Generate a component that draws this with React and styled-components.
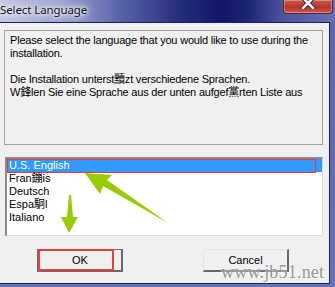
import React from 'react';
import styled, { createGlobalStyle } from 'styled-components';

const GlobalStyle = createGlobalStyle`
  html, body {
    margin: 0;
    padding: 0;
    background: #6068ae;
  }
  body {
    width: 335px;
    height: 287px;
    overflow: hidden;
  }
`;

const Window = styled.div`
  position: relative;
  width: 335px;
  height: 287px;
  box-sizing: border-box;
  padding: 0 5px 3px 0;
  display: flex;
  flex-direction: column;
  background: linear-gradient(to bottom, #5c64aa, #6a72b6);
  overflow: hidden;
  font-family: "Liberation Sans", Arial, "Noto Sans CJK SC", sans-serif;
`;

const TitleBar = styled.div`
  height: 22px;
  margin-right: -5px;
  flex-shrink: 0;
  display: flex;
  align-items: flex-start;
  justify-content: space-between;
  background: linear-gradient(
    to right,
    #c4cae4 0%,
    #98a0cf 20%,
    #5a62aa 36%,
    #262c7c 54%,
    #10156a 66%,
    #1e2474 74%,
    #4a52a0 84%,
    #6a70b4 100%
  );
`;

const Title = styled.span`
  font-family: "Noto Sans", "Open Sans", sans-serif;
  font-size: 11.5px;
  line-height: 16px;
  padding-top: 2px;
  letter-spacing: -0.1px;
  color: #111;
  text-shadow: 0 0 6px #fff, 0 0 10px #fff, 0 0 3px #fff;
`;

const CloseButton = styled.div`
  width: 48px;
  height: 13px;
  margin-right: 2px;
  display: flex;
  align-items: flex-start;
  justify-content: center;
  border: 1px solid #4a2a3a;
  border-top: none;
  border-radius: 0 0 4px 4px;
  background: linear-gradient(to bottom, #c45a4e 0%, #b8342a 55%, #d2584a 100%);
  box-shadow: inset 0 0 0 1px rgba(255, 200, 190, 0.45);
  svg {
    margin-top: -3px;
  }
`;

const Body = styled.div`
  flex: 1;
  display: flex;
  flex-direction: column;
  align-items: flex-start;
  background: #f0f0f0;
  border: 1px solid #1e2250;
  border-left: none;
  padding: 7px 0 0 4px;
`;

const GroupBox = styled.div`
  width: 319px;
  height: 115px;
  box-sizing: border-box;
  border: 1px solid #a0a0a0;
  padding: 3px 4px 3px 5px;
  font-size: 11px;
  line-height: 13px;
  letter-spacing: -0.2px;
  color: #000;
  p {
    margin: 0 0 13px;
  }
`;

const ListBox = styled.div`
  margin: 12px 0 0 1px;
  width: 318px;
  height: 79px;
  box-sizing: border-box;
  border-style: solid;
  border-width: 2px 1px 1px 2px;
  border-color: #8a8a8a #dadada #dadada #8a8a8a;
  background: #fff;
  font-size: 11px;
`;

const ListItem = styled.div`
  position: relative;
  height: 13px;
  line-height: 13px;
  padding-left: 2px;
  color: ${p => (p.$selected ? '#fff' : '#000')};
  background: ${p => (p.$selected ? '#3399ff' : 'transparent')};
  ${p =>
    p.$marked &&
    `
    &::after {
      content: '';
      position: absolute;
      left: 0;
      top: 0;
      right: 6px;
      bottom: -1px;
      border: 1px solid #e5403c;
    }
  `}
`;

const ButtonRow = styled.div`
  display: flex;
  gap: 80px;
  margin: 13px 0 0 33px;
`;

const Button = styled.div`
  position: relative;
  width: 86px;
  height: 23px;
  box-sizing: border-box;
  display: flex;
  align-items: center;
  justify-content: center;
  background: #f0f0f0;
  border-style: solid;
  border-width: 1px 2px 2px 1px;
  border-color: #e3e3e3 #696969 #696969 #e3e3e3;
  font-size: 11px;
  color: #000;
  ${p =>
    p.$default &&
    `
    border-color: #696969;
    border-width: 1px 2px 2px 2px;
  `}
  ${p =>
    p.$marked &&
    `
    &::after {
      content: '';
      position: absolute;
      left: -1px;
      top: -1px;
      width: 76px;
      height: 22px;
      box-sizing: border-box;
      border: 2px solid #e5403c;
    }
  `}
`;

const Watermark = styled.div`
  position: absolute;
  left: 221px;
  top: 262px;
  font-family: "Liberation Serif", "Times New Roman", serif;
  font-size: 18px;
  letter-spacing: 0.2px;
  color: #8c8c8c;
  text-shadow: 0 0 2px #fff, 0 0 2px #fff;
  opacity: 0.9;
  pointer-events: none;
`;

const Arrows = styled.svg`
  position: absolute;
  left: 0;
  top: 0;
  pointer-events: none;
`;

export default function App() {
  return (
    <>
      <GlobalStyle />
      <Window>
        <TitleBar>
          <Title>Select Language</Title>
          <CloseButton>
            <svg width="16" height="12" viewBox="0 0 16 12">
              <path
                d="M3 1 L13 11 M13 1 L3 11"
                stroke="#3a2430"
                strokeWidth="4.5"
                strokeLinecap="square"
              />
              <path
                d="M3 1 L13 11 M13 1 L3 11"
                stroke="#f4f0f0"
                strokeWidth="2.6"
                strokeLinecap="square"
              />
            </svg>
          </CloseButton>
        </TitleBar>
        <Body>
          <GroupBox>
            <p>Please select the language that you would like to use during the installation.</p>
            <p>
              Die Installation unterst黷zt verschiedene Sprachen.
              <br />
              W鋒len Sie eine Sprache aus der unten aufgef黨rten Liste aus
            </p>
          </GroupBox>
          <ListBox>
            <ListItem $selected $marked>U.S. English</ListItem>
            <ListItem>Fran鏰is</ListItem>
            <ListItem>Deutsch</ListItem>
            <ListItem>Espa駉l</ListItem>
            <ListItem>Italiano</ListItem>
          </ListBox>
          <ButtonRow>
            <Button $default $marked>OK</Button>
            <Button>Cancel</Button>
          </ButtonRow>
        </Body>
        <Watermark>www.jb51.net</Watermark>
        <Arrows width="335" height="287" viewBox="0 0 335 287">
          <polygon points="85,173 112,175 107,180 168,223 103,186 100,194" fill="#99cc00" />
          <polygon points="69,195 71,195 73,217 78,217 69,233 61,217 67,217" fill="#99cc00" />
        </Arrows>
      </Window>
    </>
  );
}
